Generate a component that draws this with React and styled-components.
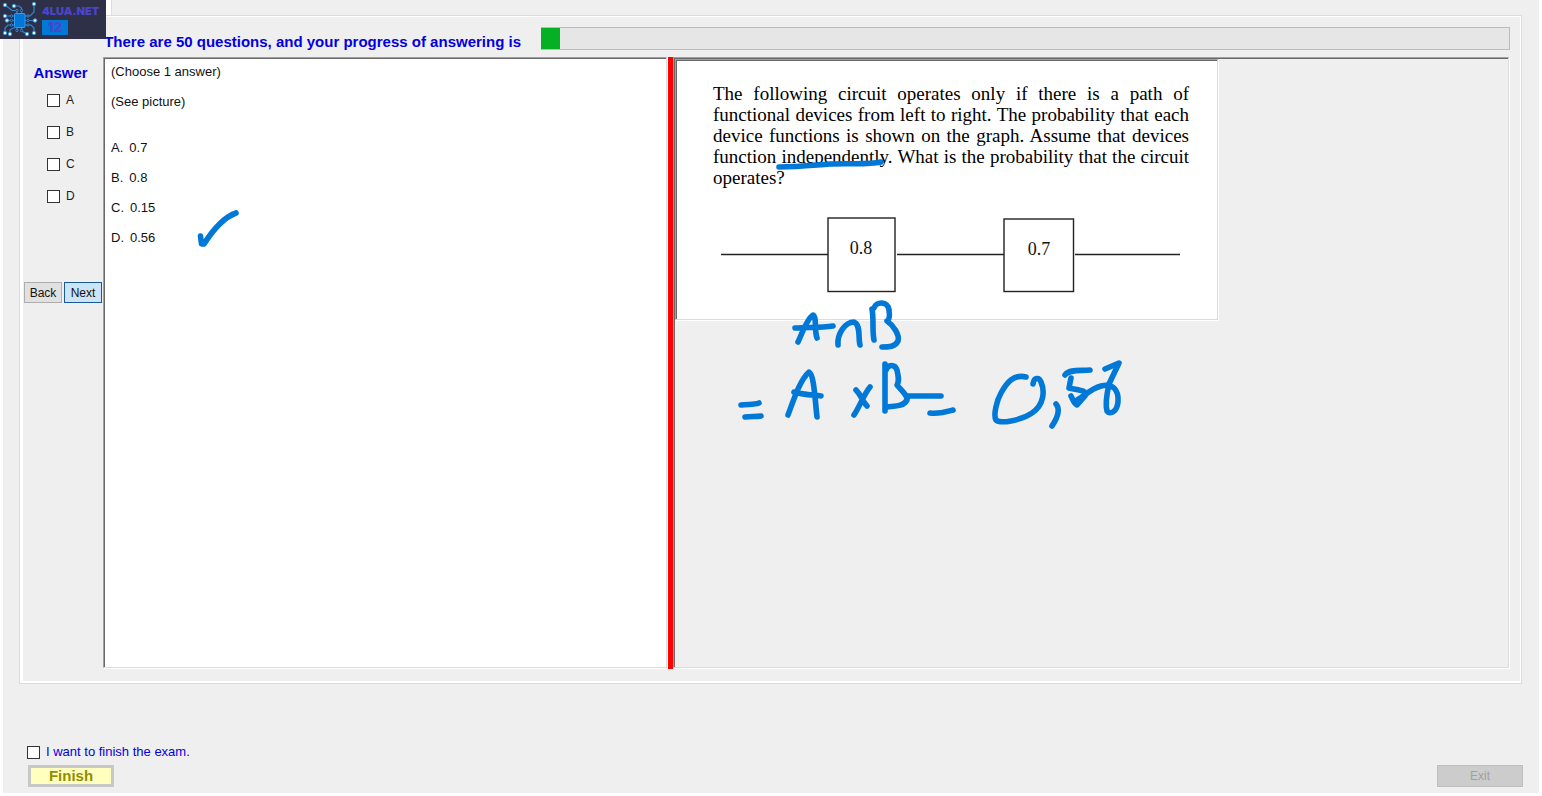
import React from "react";
import styled, { createGlobalStyle } from "styled-components";

const SANS = '"Liberation Sans", Arial, sans-serif';
const SERIF = '"Liberation Serif", "Times New Roman", serif';
const INK = "#0078d7";
const BLUE = "#0400dc";

const GlobalStyle = createGlobalStyle`
  * { box-sizing: border-box; }
  html, body, #root { height: 100%; }
  body { margin: 0; background: #fff; font: 13px/16px ${SANS}; color: #111; }
  p, ol { margin: 0; padding: 0; }
`;

const Window = styled.div`
  position: relative;
  min-height: 100%;
  display: flex;
  flex-direction: column;
  border: solid #fff;
  border-width: 0 3px 3px;
  background: #efefef;
`;

const Badge = styled.header`
  position: absolute;
  top: 0;
  left: -3px;
  z-index: 2;
  width: 106px;
  height: 39px;
  display: flex;
  gap: 4px;
  background: #2d3047;
  color: #4a45c9;
  font-family: Inter, ${SANS};
  font-weight: 900;
`;

const BadgeText = styled.div`
  display: flex;
  flex-direction: column;
  align-items: flex-start;
  gap: 3px;
  padding-top: 5px;
  font-size: 11px;
  line-height: 12px;
`;

const BadgeNumber = styled.span`
  width: 26px;
  background: ${INK};
  font-size: 13px;
  line-height: 15px;
  text-align: center;
`;

const TabStrip = styled.div`
  height: 15px;
  padding-left: 103px;
  display: flex;
  &::before { content: ""; width: 5px; height: 17px; background: #fff; }
  &::after { content: ""; flex: 1; border-left: 1px solid #dcdcdc; }
`;

const Frame = styled.main`
  flex: 1;
  display: flex;
  flex-direction: column;
  margin: 0 17px 0 16px;
  border: 1px solid #dcdcdc;
  box-shadow: inset 3px -2px #fff, inset -1px 1px #fff;
  padding: 11px 11px 14px 4px;
`;

const ProgressRow = styled.div`
  display: grid;
  grid-template-columns: 501px 1fr;
  column-gap: 16px;
  align-items: end;
  margin-bottom: 7px;
`;

const Heading = styled.h1`
  margin: 0;
  padding-right: 4px;
  color: ${BLUE};
  font: bold 15px/16px ${SANS};
  text-align: right;
`;

const SideHeading = styled(Heading)`
  padding-right: 6px;
  text-align: center;
`;

const Bar = styled.div`
  height: 23px;
  border: 1px solid #bcbcbc;
  border-left: 0;
  background: #e6e6e6;
`;

const BarFill = styled.div`
  height: 100%;
  background: #06b025;
`;

const Workspace = styled.div`
  flex: 1;
  display: grid;
  grid-template-columns: 79px 565fr 5px 837fr;
`;

const Sidebar = styled.form`
  display: flex;
  flex-direction: column;
  padding-top: 8px;
`;

const Options = styled.div`
  display: flex;
  flex-direction: column;
  gap: 16px;
  padding: 11px 0 0 23px;
`;

const Check = styled.label`
  display: flex;
  align-items: center;
  gap: 6px;
  color: ${(p) => (p.$accent ? BLUE : "#222")};
  font-size: ${(p) => (p.$accent ? "13px" : "12px")};
  line-height: 16px;
`;

const Box = styled.input`
  appearance: none;
  width: 13px;
  height: 13px;
  margin: 0;
  border: 1px solid #333;
  background: #fff;
`;

const NavButtons = styled.div`
  display: flex;
  gap: 2px;
  margin-top: 78px;
`;

const NavButton = styled.button`
  width: 38px;
  height: 21px;
  padding: 0;
  border: 1px solid ${(p) => (p.$primary ? "#1a5a94" : "#adadad")};
  background: ${(p) => (p.$primary ? "#cce4f7" : "#e1e1e1")};
  color: #111;
  font: 12px/16px ${SANS};
`;

const Pane = styled.section`
  position: relative;
  border: 1px solid;
  border-color: #a0a0a0 #dcdcdc #dcdcdc #a0a0a0;
  box-shadow: 1px 1px #fff, inset 1px 1px #696969;
  margin: 0 1px 1px 0;
  padding: 1px 0 0 1px;
  background: ${(p) => p.$fill};
`;

const Question = styled.div`
  display: flex;
  flex-direction: column;
  gap: 14px;
  padding: 5px 6px;
`;

const Answers = styled.ol`
  list-style: none;
  display: flex;
  flex-direction: column;
  gap: 14px;
  padding-top: 16px;
  li { display: flex; gap: 6px; }
`;

const Splitter = styled.div`
  background: #fd0000;
`;

const Picture = styled.figure`
  width: 543px;
  max-width: 100%;
  margin: 0;
  padding: 23px 28px 25px 37px;
  border: 1px solid;
  border-color: #a0a0a0 #dcdcdc #dcdcdc #a0a0a0;
  box-shadow: 1px 1px #fff, inset 1px 1px #696969;
  background: #fff;
`;

const Passage = styled.p`
  color: #000;
  font: 19px/21px ${SERIF};
  text-align: justify;
`;

const Circuit = styled.svg`
  display: block;
  margin: 28px 0 0 7px;
  fill: none;
  stroke: #222;
  stroke-width: 1.4;
  text { fill: #111; stroke: none; font: 18px ${SERIF}; text-anchor: middle; }
`;

const Ink = styled.svg`
  position: absolute;
  top: 1px;
  left: 1px;
  fill: none;
  stroke: ${INK};
  stroke-width: 5.6;
  stroke-linecap: round;
  stroke-linejoin: round;
  pointer-events: none;
`;

const Footer = styled.footer`
  display: flex;
  justify-content: space-between;
  align-items: flex-end;
  padding: 60px 16px 6px 24px;
`;

const FinishGroup = styled.div`
  display: flex;
  flex-direction: column;
  gap: 5px;
`;

const ActionButton = styled.button`
  width: 86px;
  height: 22px;
  padding: 0;
  border: ${(p) => (p.$finish ? "3px solid #c8c8c8" : "1px solid #bfbfbf")};
  background: ${(p) => (p.$finish ? "#ffffc0" : "#cccccc")};
  color: ${(p) => (p.$finish ? "#8f8f00" : "#a0a0a0")};
  font: ${(p) => (p.$finish ? "bold 15px/16px" : "12px/16px")} ${SANS};
  margin-left: ${(p) => (p.$finish ? "1px" : "0")};
`;

const choices = [
  ["A", "0.7"],
  ["B", "0.8"],
  ["C", "0.15"],
  ["D", "0.56"],
];

const pads = [
  [5, 5], [14, 6], [34, 4], [5, 16], [7, 20.5], [35, 20.5], [5, 33],
  [10, 34], [27, 34], [34, 33],
];

const pins = [
  [17, 10.5], [21.5, 10.5], [11.5, 16], [11.5, 20.5], [11.5, 25],
  [28, 16], [28, 20.5], [28, 25], [17, 30.5], [21.5, 30.5],
];

function ChipLogo() {
  return (
    <svg width="38" height="39" viewBox="0 0 38 39" fill="none" aria-hidden="true">
      <path
        d="M5 5L12 10.5H17V14M14 6H19L21.5 8V14M34 4V12L30 16H25M5 16H15M7 20.5H15M35 20.5H25M5 33V28L8 25H15M10 34V30L13 28H15M27 34L21.5 31V27M17 27V31M34 33V28L31 25H25"
        stroke="#2f86d6"
        strokeWidth="1.2"
      />
      {pins.map(([x, y]) => (
        <circle key={`${x}-${y}`} cx={x} cy={y} r="1.2" fill="#2d3047" stroke="#2f86d6" />
      ))}
      <rect x="14.5" y="13.5" width="10.5" height="14" rx="1" fill="#0078d7" stroke="#3c9aec" />
      {pads.map(([x, y]) => (
        <circle key={`${x}-${y}`} cx={x} cy={y} r="1.7" fill="#e4f6ff" stroke="#3d9be0" />
      ))}
    </svg>
  );
}

export default function App() {
  const answered = 1;
  const total = 50;
  return (
    <>
      <GlobalStyle />
      <Window>
        <Badge>
          <ChipLogo />
          <BadgeText>
            <span>4LUA.NET</span>
            <BadgeNumber>12</BadgeNumber>
          </BadgeText>
        </Badge>
        <TabStrip />
        <Frame>
          <ProgressRow>
            <Heading>
              There are 50 questions, and your progress of answering is
            </Heading>
            <Bar role="progressbar" aria-valuenow={answered} aria-valuemax={total}>
              <BarFill style={{ width: `${(answered / total) * 100}%` }} />
            </Bar>
          </ProgressRow>
          <Workspace>
            <Sidebar onSubmit={(e) => e.preventDefault()}>
              <SideHeading as="h2">Answer</SideHeading>
              <Options>
                {choices.map(([letter]) => (
                  <Check key={letter}>
                    <Box type="checkbox" />
                    {letter}
                  </Check>
                ))}
              </Options>
              <NavButtons>
                <NavButton type="button">Back</NavButton>
                <NavButton type="button" $primary>Next</NavButton>
              </NavButtons>
            </Sidebar>
            <Pane $fill="#fff">
              <Question>
                <p>(Choose 1 answer)</p>
                <p>(See picture)</p>
                <Answers>
                  {choices.map(([letter, value]) => (
                    <li key={letter}>
                      <span>{letter}.</span>
                      <span>{value}</span>
                    </li>
                  ))}
                </Answers>
              </Question>
              <Ink width="160" height="200" viewBox="105 59 160 200" aria-hidden="true">
                <path d="M200.500 236L201.500 244L204 244C211 233 222 218 236 213" />
              </Ink>
            </Pane>
            <Splitter />
            <Pane $fill="#efefef">
              <Picture>
                <Passage>
                  The following circuit operates only if there is a path of
                  functional devices from left to right. The probability that
                  each device functions is shown on the graph. Assume that
                  devices function independently. What is the probability that
                  the circuit operates?
                </Passage>
                <Circuit width="462" height="78" viewBox="720 216 462 78">
                  <path d="M721 254.5H828M897 254.5H1004M1075 254.5H1180" />
                  <rect x="828" y="218" width="67" height="73.5" />
                  <rect x="1004" y="219" width="69.5" height="72.5" />
                  <text x="861" y="254">0.8</text>
                  <text x="1039" y="255">0.7</text>
                </Circuit>
              </Picture>
              <Ink width="500" height="400" viewBox="675 59 500 400" aria-hidden="true">
                <path d="M779 167C800 167 815 165 830 164C850 163 868 165 881 162" />
                <path d="M798 342C802 334 806 320 813 315C817 317 814 330 817 338M795 328C808 327 820 328 833 326" />
                <path d="M838 345C837 334 845 322 854 322C861 325 858 338 860 345" />
                <path d="M872 309C874 320 872 330 874 340M874 308C876 301 888 301 889 310C890 317 889 320 887 321C893 325 900 335 898 341C895 347 889 347 882 347" />
                <path d="M741 405C748 404 754 405 759 403M745 417C751 416 756 417 761 416" />
                <path d="M788 415C794 399 800 380 809 372C814 374 815 400 817 417M794 392C804 395 813 395 821 396" />
                <path d="M856 390C862 396 862 401 867 406M870 387C864 394 860 406 854 415" />
                <path d="M885 364V411M886 370C888 364 895 364 897 370C899 379 899 382 897 385C902 391 908 396 907 400C903 407 894 406 887 407M908 396H941M930 413C940 414 946 412 953 410" />
                <path d="M1026 377C1014 374 1007 382 1001 393C997 400 993 415 996 420C1000 424 1020 421 1032 413C1044 405 1045 391 1041 382C1039 377 1034 377 1033 384" />
                <path d="M1056 404C1061 410 1056 420 1052 426" />
                <path d="M1065 375C1069 369 1080 371 1090 370M1071 378L1069 388C1076 390 1089 390 1085 396L1077 405C1074 404 1073 400 1071 396M1077 400C1085 396 1090 389 1101 386C1113 383 1119 390 1118 402C1117 412 1110 415 1107 411C1105 404 1107 393 1109 384L1119 363L1105 369" />
              </Ink>
            </Pane>
          </Workspace>
        </Frame>
        <Footer>
          <FinishGroup>
            <Check $accent>
              <Box type="checkbox" />
              I want to finish the exam.
            </Check>
            <ActionButton type="button" $finish>Finish</ActionButton>
          </FinishGroup>
          <ActionButton type="button" disabled>Exit</ActionButton>
        </Footer>
      </Window>
    </>
  );
}
